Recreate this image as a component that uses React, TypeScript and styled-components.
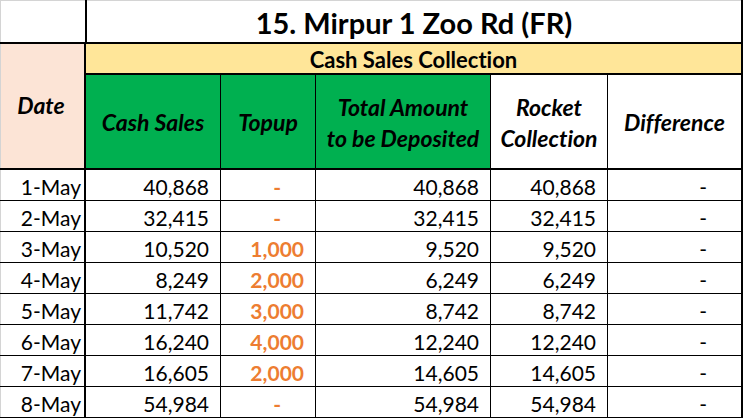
import React from "react";
import styled, { createGlobalStyle } from "styled-components";

const GlobalStyle = createGlobalStyle`
  html, body {
    margin: 0;
    padding: 0;
    background: #ffffff;
  }
  body {
    font-family: Lato, "Open Sans", "Liberation Sans", sans-serif;
    font-variant-ligatures: none;
    color: #000000;
  }
`;

interface DayRow {
  date: string;
  cash: string;
  topup: string | null;
  total: string;
  rocket: string;
}

const rows: DayRow[] = [
  { date: "1-May", cash: "40,868", topup: null, total: "40,868", rocket: "40,868" },
  { date: "2-May", cash: "32,415", topup: null, total: "32,415", rocket: "32,415" },
  { date: "3-May", cash: "10,520", topup: "1,000", total: "9,520", rocket: "9,520" },
  { date: "4-May", cash: "8,249", topup: "2,000", total: "6,249", rocket: "6,249" },
  { date: "5-May", cash: "11,742", topup: "3,000", total: "8,742", rocket: "8,742" },
  { date: "6-May", cash: "16,240", topup: "4,000", total: "12,240", rocket: "12,240" },
  { date: "7-May", cash: "16,605", topup: "2,000", total: "14,605", rocket: "14,605" },
  { date: "8-May", cash: "54,984", topup: null, total: "54,984", rocket: "54,984" },
];

export default function App() {
  return (
    <>
      <GlobalStyle />
      <Sheet>
        <CornerCell />
        <TitleCell>15. Mirpur 1 Zoo Rd (FR)</TitleCell>

        <DateHead>Date</DateHead>
        <SectionCell>Cash Sales Collection</SectionCell>

        <HeadCell $green>Cash Sales</HeadCell>
        <HeadCell $green>Topup</HeadCell>
        <HeadCell $green>
          Total Amount
          <br />
          to be Deposited
        </HeadCell>
        <HeadCell>
          Rocket
          <br />
          Collection
        </HeadCell>
        <HeadCell $edge>Difference</HeadCell>

        {rows.map((row) => (
          <React.Fragment key={row.date}>
            <DateCell>{row.date}</DateCell>
            <NumCell>{row.cash}</NumCell>
            {row.topup ? <TopupCell>{row.topup}</TopupCell> : <DashCell $orange>-</DashCell>}
            <NumCell>{row.total}</NumCell>
            <NumCell>{row.rocket}</NumCell>
            <DashCell $edge>-</DashCell>
          </React.Fragment>
        ))}
      </Sheet>
    </>
  );
}

const Sheet = styled.div`
  display: grid;
  grid-template-columns: 86px 135px 95px 175px 117px 135px;
  grid-template-rows: 44px 31px 95px repeat(8, 31px);
  width: 743px;
  background: #ffffff;

  & > * {
    box-sizing: border-box;
    min-width: 0;
  }
`;

const CornerCell = styled.div`
  grid-column: 1;
  grid-row: 1;
  border-right: 1px solid #000;
  border-bottom: 2px solid #000;
  box-shadow: inset 1px 1px 0 #d4d4d4;
`;

const TitleCell = styled.div`
  grid-column: 2 / 7;
  grid-row: 1;
  display: flex;
  align-items: center;
  justify-content: center;
  padding-top: 3px;
  border-left: 1px solid #000;
  border-right: 2px solid #000;
  border-bottom: 2px solid #000;
  box-shadow: inset 0 1px 0 #d4d4d4;
  font-size: 29px;
  font-weight: 700;
`;

const DateHead = styled.div`
  grid-column: 1;
  grid-row: 2 / 4;
  display: flex;
  align-items: center;
  justify-content: center;
  padding: 0 2px 2px 0;
  background: #fce4d6;
  border-right: 2px solid #000;
  border-bottom: 2px solid #000;
  box-shadow: inset 1px 0 0 #d4d4d4;
  font-size: 23px;
  font-weight: 700;
  font-style: italic;
`;

const SectionCell = styled.div`
  grid-column: 2 / 7;
  grid-row: 2;
  display: flex;
  align-items: center;
  justify-content: center;
  padding-top: 2px;
  background: #ffe699;
  border-right: 2px solid #000;
  border-bottom: 2px solid #000;
  font-size: 22px;
  font-weight: 700;
`;

const HeadCell = styled.div<{ $green?: boolean; $edge?: boolean }>`
  display: flex;
  align-items: center;
  justify-content: center;
  text-align: center;
  padding-top: 2px;
  background: ${({ $green }) => ($green ? "#00b050" : "#ffffff")};
  border-right: ${({ $edge }) => ($edge ? 2 : 1)}px solid #000;
  border-bottom: 2px solid #000;
  font-size: 23px;
  line-height: 31px;
  font-weight: 700;
  font-style: italic;
  white-space: nowrap;
`;

const DataCell = styled.div`
  display: flex;
  align-items: center;
  justify-content: flex-end;
  padding: 2px 11px 0 0;
  border-right: 1px solid #000;
  border-bottom: 1px solid #000;
  font-size: 21px;
  white-space: nowrap;
`;

const DateCell = styled(DataCell)`
  padding-right: 3px;
  border-right-width: 2px;
  box-shadow: inset 1px 0 0 #d4d4d4;
`;

const NumCell = styled(DataCell)``;

const TopupCell = styled(DataCell)`
  color: #ed7d31;
  font-weight: 700;
`;

const DashCell = styled(DataCell)<{ $orange?: boolean; $edge?: boolean }>`
  padding-right: 34px;
  color: ${({ $orange }) => ($orange ? "#ed7d31" : "#000000")};
  font-weight: ${({ $orange }) => ($orange ? 700 : 400)};
  border-right-width: ${({ $edge }) => ($edge ? 2 : 1)}px;
`;
